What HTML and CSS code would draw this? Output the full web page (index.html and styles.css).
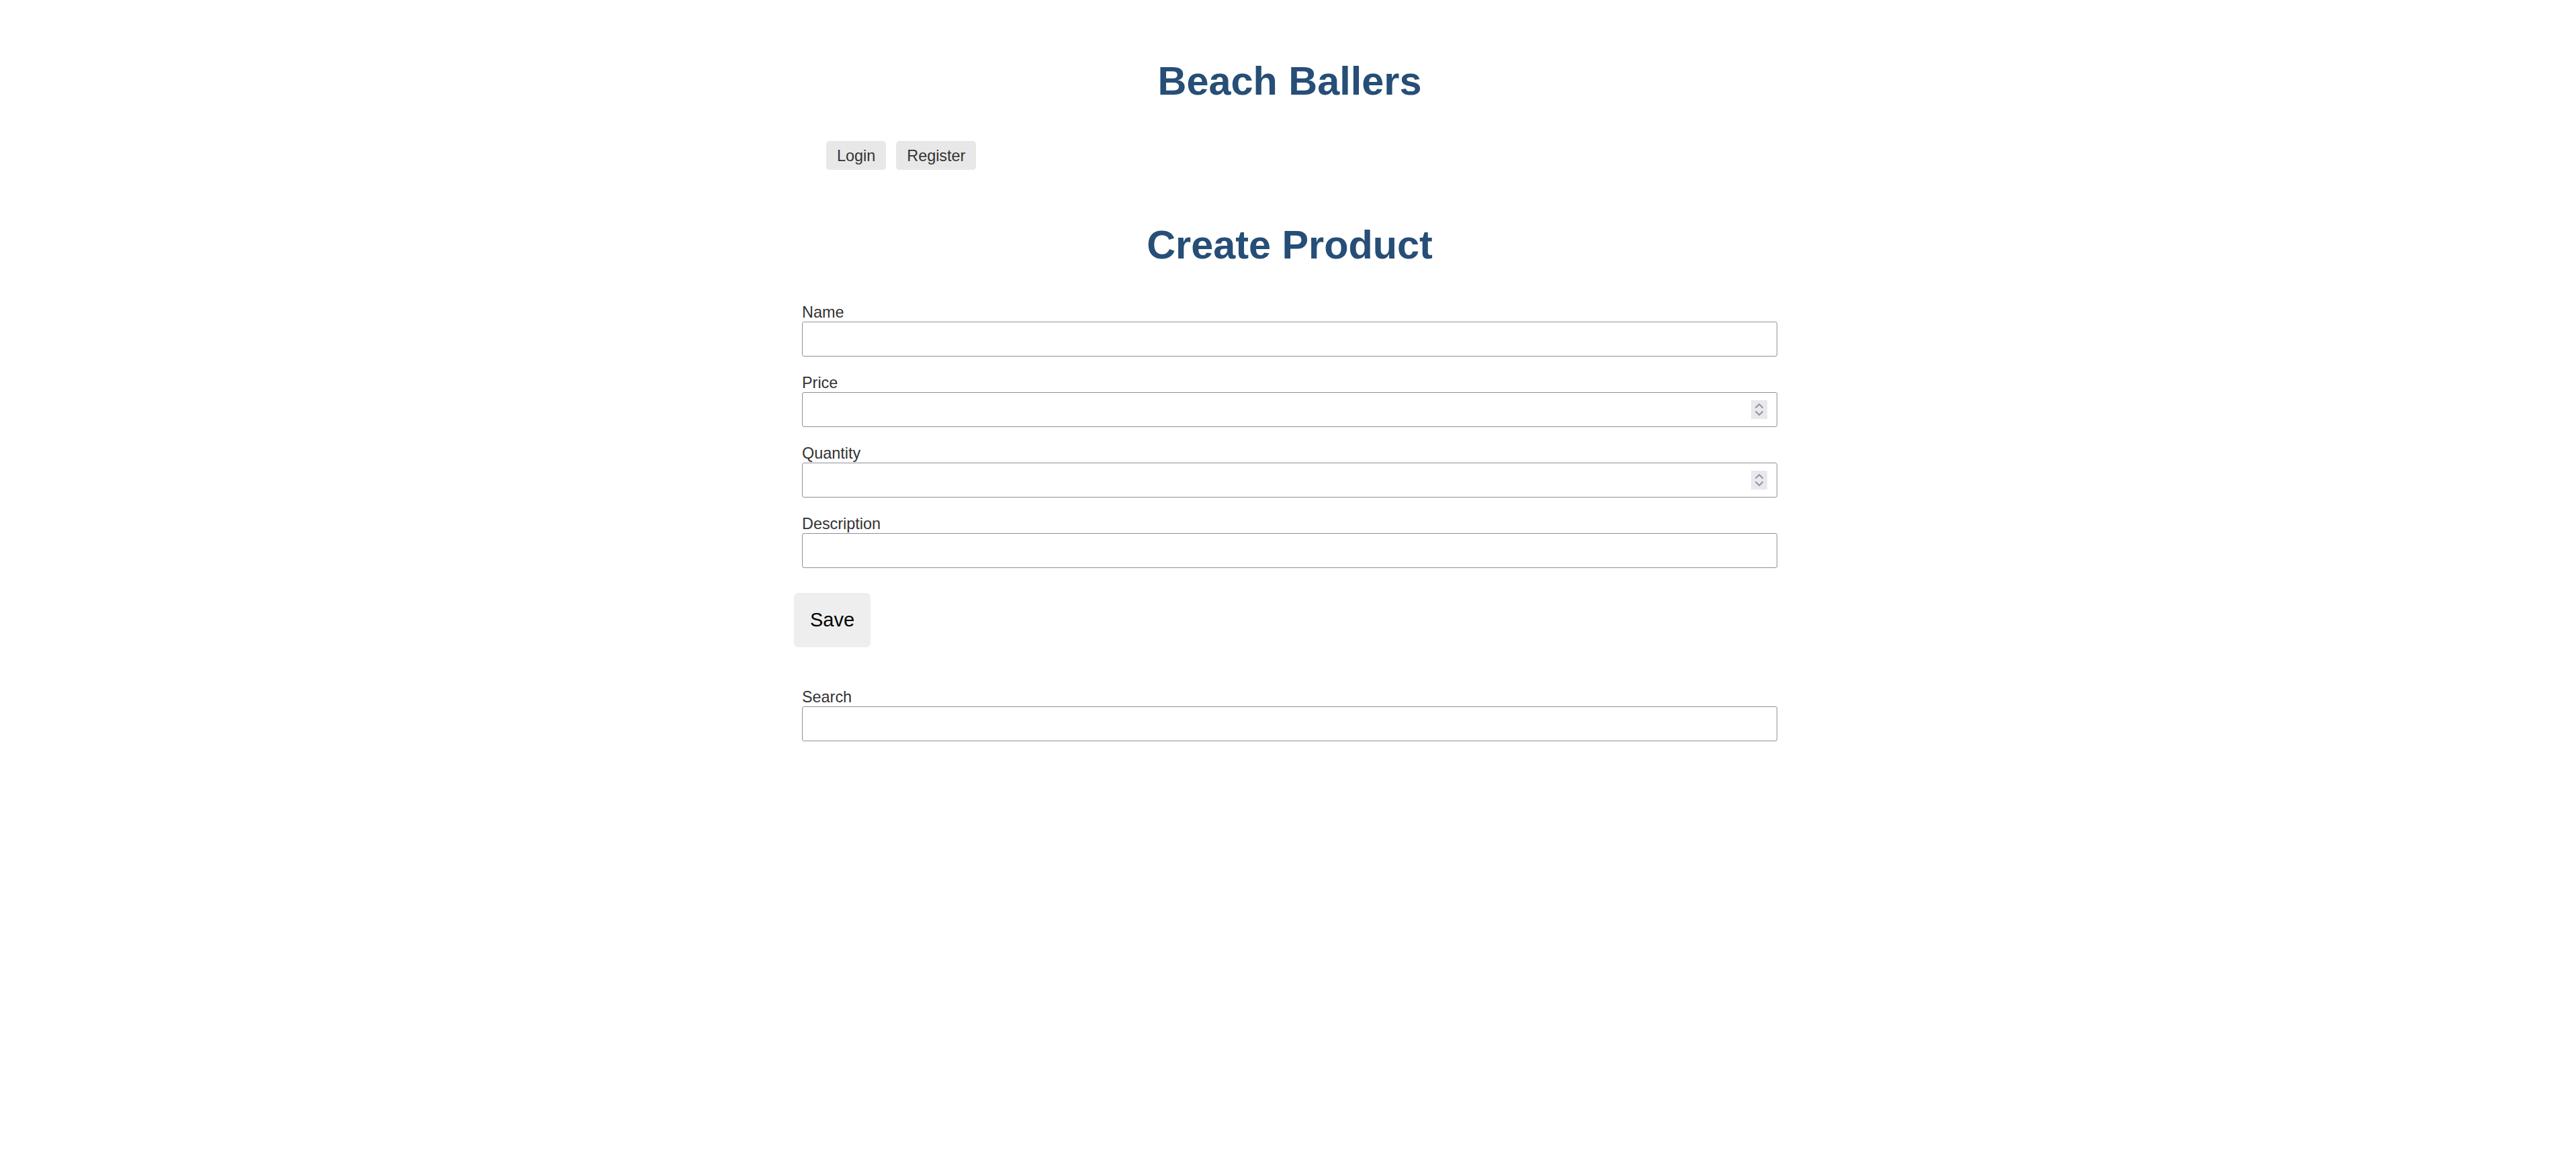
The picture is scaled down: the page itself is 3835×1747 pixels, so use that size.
FILE: index.html
```html
<!DOCTYPE html>
<html lang="en">
<head>
<meta charset="utf-8">
<title>Beach Ballers</title>
<link rel="stylesheet" href="styles.css">
</head>
<body>
<div class="page">
  <header class="site-header">
    <h1 class="brand">Beach Ballers</h1>
    <nav class="nav">
      <button class="nav-btn" type="button">Login</button>
      <button class="nav-btn" type="button">Register</button>
    </nav>
  </header>
  <main class="main">
    <h2 class="page-title">Create Product</h2>
    <form class="product-form">
      <div class="field">
        <label class="field-label" for="name">Name</label>
        <input class="field-input" id="name" type="text">
      </div>
      <div class="field">
        <label class="field-label" for="price">Price</label>
        <div class="number-wrap">
          <input class="field-input" id="price" type="number">
          <span class="spin"><svg width="24" height="28" viewBox="0 0 24 28"><path d="M7 11 L12 6 L17 11 M7 17 L12 22 L17 17" fill="none" stroke="#8f8f9d" stroke-width="1.8" stroke-linecap="round" stroke-linejoin="round"/></svg></span>
        </div>
      </div>
      <div class="field">
        <label class="field-label" for="quantity">Quantity</label>
        <div class="number-wrap">
          <input class="field-input" id="quantity" type="number">
          <span class="spin"><svg width="24" height="28" viewBox="0 0 24 28"><path d="M7 11 L12 6 L17 11 M7 17 L12 22 L17 17" fill="none" stroke="#8f8f9d" stroke-width="1.8" stroke-linecap="round" stroke-linejoin="round"/></svg></span>
        </div>
      </div>
      <div class="field">
        <label class="field-label" for="description">Description</label>
        <input class="field-input" id="description" type="text">
      </div>
      <button class="save-btn" type="button">Save</button>
    </form>
    <div class="search">
      <label class="field-label" for="search">Search</label>
      <input class="field-input" id="search" type="text">
    </div>
  </main>
</div>
</body>
</html>
```

FILE: styles.css
```css
html, body {
  margin: 0;
  background: #ffffff;
}

body {
  padding: 0 0 0 5px;
  font-family: "Liberation Sans", Arial, sans-serif;
  color: #333333;
}

.page {
  width: 1476px;
  margin: 0 auto;
}

.brand {
  margin: 88px 0 0;
  font-size: 59.4px;
  line-height: 66px;
  font-weight: bold;
  color: #264e76;
  text-align: center;
}

.nav {
  display: flex;
  gap: 15px;
  margin-top: 56px;
  padding-left: 48px;
}

.nav-btn {
  font-family: "Liberation Sans", Arial, sans-serif;
  font-size: 23.4px;
  line-height: 28px;
  padding: 8px 16px 7px;
  border: none;
  border-radius: 5px;
  background: #e8e8e8;
  color: #333333;
}

.page-title {
  margin: 79px 0 0;
  font-size: 59.4px;
  line-height: 66px;
  font-weight: bold;
  color: #264e76;
  text-align: center;
}

.product-form {
  margin-top: 54px;
}

.field {
  margin: 0 12px 26px;
}

.field-label {
  display: block;
  font-size: 23.4px;
  line-height: 27px;
  color: #333333;
}

.field-input {
  display: block;
  box-sizing: border-box;
  width: 100%;
  height: 52px;
  margin: 0;
  padding: 0 10px;
  border: 1px solid #8f8f9d;
  border-radius: 3px;
  background: #ffffff;
  font-family: "Liberation Sans", Arial, sans-serif;
  font-size: 23.4px;
  outline: none;
}

.field-input[type="number"] {
  -moz-appearance: textfield;
  appearance: textfield;
}

.field-input::-webkit-inner-spin-button,
.field-input::-webkit-outer-spin-button {
  -webkit-appearance: none;
  margin: 0;
}

.number-wrap {
  position: relative;
}

.spin {
  position: absolute;
  right: 15px;
  top: 12px;
  width: 24px;
  height: 28px;
  background: #e9e9ed;
}

.spin svg {
  display: block;
}

.save-btn {
  display: block;
  margin-top: 37px;
  font-family: "Liberation Sans", Arial, sans-serif;
  font-size: 29px;
  line-height: 33px;
  padding: 24px;
  border: none;
  border-radius: 6px;
  background: #eeeeee;
  color: #000000;
}

.search {
  margin: 61px 12px 0;
}
```
